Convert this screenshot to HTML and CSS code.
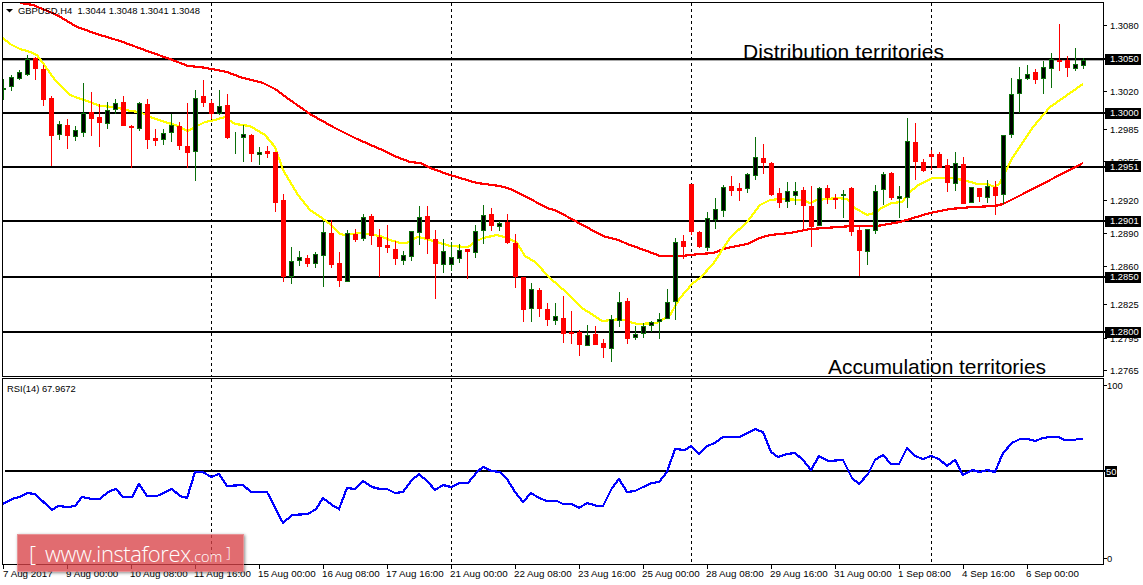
FILE: index.html
```html
<!DOCTYPE html>
<html lang="en">
<head>
<meta charset="utf-8">
<title>GBPUSD,H4</title>
<link rel="stylesheet" href="styles.css">
</head>
<body>
<main class="terminal">
  <section class="pane pane-main">
    <svg class="chart chart-main" viewBox="0 2 1143 375" width="1143" height="375">
      <defs><clipPath id="plot"><rect x="3" y="3" width="1100" height="373"/></clipPath></defs>
      <path class="shade" d="M3 60.5H1103"/>
      <path class="level" d="M3 59H1105M3 113H1105M3 167H1105M3 221H1105M3 277H1105M3 332H1105"/>
      <path class="dash" d="M211.5 3V376M451.5 3V376M691.5 3V376M931.5 3V376"/>
      <polyline class="ma-red" clip-path="url(#plot)" points="20,3 33,5 57,15 77,27 100,35 120,41 150,52 170,59 188,66 200,67 217,70 227,72 240,77 263,83 275,89 290,100 310,114 333,127 357,139 380,149 397,157 410,162 420,163 433,169 450,175 460,178 477,183 500,186 510,189 523,195 547,208 557,211 577,222 603,236 618,240 630,245 647,251 660,256 682,256 700,254 713,253 727,248 747,244 760,238 770,235 790,233 810,229 853,226 877,226 900,222 930,213 950,209 973,207 995,206 1003,204 1023,194 1083,163"/>
      <polyline class="ma-yellow" clip-path="url(#plot)" points="3,38 10,44 20,49 30,52 37,55 45,66 55,80 70,95 78,98 90,102 100,106 115,107 130,111 140,112 150,117 165,122 175,125 188,131 195,127 205,122 215,120 225,117 235,124 250,126 265,135 275,147 283,170 298,195 310,210 322,218 330,224 340,234 345,235 360,233 380,236 390,240 400,243 407,243 417,237 423,238 437,242 450,246 468,247 475,242 483,238 497,235 508,238 517,243 525,256 535,262 550,278 567,293 582,308 593,315 602,321 612,320 620,319 630,322 637,324 657,323 670,315 680,298 692,284 700,278 713,264 730,238 747,222 760,205 770,200 780,199 803,200 810,203 817,200 837,198 847,199 855,208 867,215 875,213 883,207 892,203 902,202 910,192 917,186 932,178 943,178 953,178 967,181 977,184 987,184 995,187 1000,183 1005,172 1013,157 1023,142 1033,127 1050,107 1063,98 1083,84"/>
      <path class="wick-red" d="M35.5 57V80M43.5 65V106M51.5 96V166M67.5 119V149M91.5 92V136M99.5 104V147M123.5 96V126M131.5 125V168M147.5 99V149M155.5 129V146M179.5 122V150M187.5 103V168M203.5 80V107M211.5 100V119M227.5 94V139M251.5 134V162M267.5 146V158M275.5 152V212M283.5 194V282M307.5 255V267M331.5 220V268M339.5 252V287M355.5 229V242M371.5 214V245M379.5 229V277M387.5 225V253M395.5 241V265M427.5 206V254M435.5 230V299M467.5 249V279M491.5 208V231M507.5 214V244M515.5 234V288M523.5 277V322M539.5 288V317M547.5 303V326M563.5 296V343M571.5 311V344M579.5 330V356M595.5 326V345M603.5 339V358M627.5 298V344M683.5 235V259M691.5 184V235M699.5 231V248M731.5 176V196M739.5 183V201M763.5 144V174M771.5 162V196M779.5 188V208M803.5 187V229M811.5 186V247M827.5 185V204M835.5 194V209M851.5 187V236M859.5 226V276M891.5 172V200M915.5 123V180M923.5 159V172M931.5 150V170M939.5 152V168M947.5 159V192M963.5 157V204M979.5 188V202M995.5 181V215M1035.5 69V84M1059.5 24V71M1067.5 56V77"/>
      <path class="body-red" d="M33 58h5v11h-5zM41 69h5v31h-5zM49 98h5v38h-5zM65 125h5v11h-5zM89 112h5v7h-5zM97 117h5v6h-5zM121 102h5v24h-5zM129 126h5v2h-5zM145 104h5v36h-5zM153 138h5v3h-5zM177 126h5v20h-5zM185 146h5v7h-5zM201 96h5v7h-5zM209 103h5v11h-5zM225 105h5v33h-5zM249 135h5v19h-5zM265 151h5v3h-5zM273 152h5v51h-5zM281 200h5v77h-5zM305 258h5v6h-5zM329 233h5v32h-5zM337 263h5v18h-5zM353 234h5v6h-5zM369 216h5v20h-5zM377 237h5v10h-5zM385 245h5v3h-5zM393 249h5v10h-5zM425 216h5v23h-5zM433 239h5v25h-5zM465 249h5v3h-5zM489 214h5v12h-5zM505 222h5v21h-5zM513 243h5v34h-5zM521 277h5v33h-5zM537 290h5v19h-5zM545 309h5v11h-5zM561 318h5v16h-5zM569 332h5v2h-5zM577 332h5v13h-5zM593 334h5v11h-5zM601 343h5v5h-5zM625 301h5v38h-5zM681 241h5v6h-5zM689 184h5v48h-5zM697 232h5v15h-5zM729 186h5v5h-5zM737 188h5v3h-5zM761 158h5v5h-5zM769 163h5v32h-5zM777 193h5v10h-5zM801 190h5v16h-5zM809 206h5v21h-5zM825 188h5v10h-5zM833 198h5v2h-5zM849 188h5v44h-5zM857 230h5v21h-5zM889 173h5v25h-5zM913 142h5v20h-5zM921 162h5v9h-5zM929 154h5v3h-5zM937 154h5v14h-5zM945 165h5v18h-5zM961 164h5v40h-5zM977 188h5v9h-5zM993 187h5v9h-5zM1033 72h5v8h-5zM1057 60h5v2h-5zM1065 60h5v8h-5z"/>
      <path class="wick-green" clip-path="url(#plot)" d="M3.5 79V100M11.5 75V91M19.5 70V80M27.5 55V76M59.5 121V140M75.5 126V141M83.5 83V137M107.5 102V129M115.5 99V114M139.5 102V131M163.5 129V145M171.5 114V142M195.5 90V181M219.5 90V115M235.5 132V154M243.5 125V162M259.5 147V165M291.5 247V284M299.5 251V266M315.5 252V268M323.5 221V287M347.5 230V282M363.5 214V241M403.5 251V265M411.5 231V261M419.5 206V245M443.5 239V273M451.5 242V271M459.5 244V263M475.5 225V258M483.5 205V244M499.5 221V231M531.5 283V322M555.5 303V325M587.5 325V346M611.5 315V362M619.5 292V327M635.5 326V340M643.5 323V338M651.5 321V332M659.5 313V339M667.5 289V319M675.5 238V320M707.5 212V251M715.5 198V229M723.5 185V217M747.5 173V193M755.5 137V180M787.5 182V208M795.5 182V205M819.5 187V226M843.5 190V218M867.5 229V265M875.5 185V234M883.5 172V205M899.5 186V218M907.5 118V208M955.5 152V191M971.5 187V203M987.5 180V203M1003.5 135V204M1011.5 78V138M1019.5 67V113M1027.5 65V80M1043.5 61V94M1051.5 53V88M1075.5 48V71M1083.5 58V69"/>
      <path class="body-green" clip-path="url(#plot)" d="M1.5 88.5h4v1h-4zM9.5 77.5h4v9h-4zM17.5 72.5h4v6h-4zM25.5 59.5h4v15h-4zM57.5 124.5h4v10h-4zM73.5 130.5h4v6h-4zM81.5 113.5h4v19h-4zM105.5 110.5h4v13h-4zM113.5 103.5h4v6h-4zM137.5 103.5h4v25h-4zM161.5 133.5h4v6h-4zM169.5 125.5h4v7h-4zM193.5 98.5h4v53h-4zM217.5 106.5h4v7h-4zM241.5 134.5h4v3h-4zM257.5 152.5h4v2h-4zM289.5 261.5h4v15h-4zM297.5 257.5h4v3h-4zM313.5 254.5h4v9h-4zM321.5 232.5h4v23h-4zM345.5 233.5h4v48h-4zM361.5 217.5h4v21h-4zM401.5 255.5h4v5h-4zM409.5 231.5h4v25h-4zM417.5 217.5h4v15h-4zM441.5 251.5h4v13h-4zM449.5 257.5h4v7h-4zM457.5 250.5h4v8h-4zM473.5 231.5h4v21h-4zM481.5 215.5h4v15h-4zM497.5 223.5h4v3h-4zM529.5 289.5h4v19h-4zM553.5 316.5h4v4h-4zM585.5 335.5h4v10h-4zM609.5 319.5h4v29h-4zM617.5 302.5h4v18h-4zM633.5 334.5h4v3h-4zM641.5 326.5h4v7h-4zM649.5 322.5h4v3h-4zM657.5 319.5h4v2h-4zM665.5 302.5h4v16h-4zM673.5 242.5h4v59h-4zM705.5 218.5h4v29h-4zM713.5 209.5h4v10h-4zM721.5 187.5h4v23h-4zM745.5 174.5h4v14h-4zM753.5 157.5h4v18h-4zM785.5 191.5h4v10h-4zM793.5 191.5h4v4h-4zM817.5 188.5h4v37h-4zM841.5 194.5h4v1h-4zM865.5 229.5h4v22h-4zM873.5 191.5h4v39h-4zM881.5 174.5h4v15h-4zM897.5 196.5h4v2h-4zM905.5 141.5h4v56h-4zM953.5 163.5h4v20h-4zM969.5 187.5h4v15h-4zM985.5 186.5h4v11h-4zM1001.5 135.5h4v59h-4zM1009.5 94.5h4v40h-4zM1017.5 79.5h4v14h-4zM1025.5 74.5h4v4h-4zM1041.5 67.5h4v11h-4zM1049.5 59.5h4v9h-4zM1073.5 64.5h4v4h-4zM1081.5 60.5h4v5h-4z"/>
      <path class="frame" d="M2.5 2.5H1103.5V376.5H2.5ZM1103 25.5H1107M1103 91.5H1107M1103 129.5H1107M1103 161.5H1107M1103 200.5H1107M1103 233.5H1107M1103 266.5H1107M1103 304.5H1107M1103 338.5H1107M1103 370.5H1107"/>
      <path class="marker" d="M6 9H13L9.5 12.5Z"/>
      <text class="legend" x="18" y="14">GBPUSD,H4  1.3044 1.3048 1.3041 1.3048</text>
      <text class="note" x="743" y="59" textLength="201">Distribution territories</text>
      <text class="note" x="828" y="374" textLength="218">Accumulation territories</text>
      <text class="tick" x="1110" y="29">1.3080</text>
      <text class="tick" x="1110" y="95">1.3020</text>
      <text class="tick" x="1110" y="133">1.2985</text>
      <text class="tick" x="1110" y="165">1.2955</text>
      <text class="tick" x="1110" y="204">1.2920</text>
      <text class="tick" x="1110" y="237">1.2890</text>
      <text class="tick" x="1110" y="270">1.2860</text>
      <text class="tick" x="1110" y="308">1.2825</text>
      <text class="tick" x="1110" y="342">1.2795</text>
      <text class="tick" x="1110" y="374">1.2765</text>
      <path class="tag" d="M1105 54h36v11h-36zM1105 108h36v11h-36zM1105 161h36v11h-36zM1105 216h36v11h-36zM1105 272h36v11h-36zM1105 327h36v11h-36z"/>
      <text class="tag-text" x="1110" y="62">1.3050</text>
      <text class="tag-text" x="1110" y="116">1.3000</text>
      <text class="tag-text" x="1110" y="170">1.2951</text>
      <text class="tag-text" x="1110" y="224">1.2901</text>
      <text class="tag-text" x="1110" y="280">1.2850</text>
      <text class="tag-text" x="1110" y="335">1.2800</text>
    </svg>
  </section>
  <section class="pane pane-rsi">
    <svg class="chart chart-rsi" viewBox="0 378 1143 187" width="1143" height="187">
      <path class="level" d="M5 471H1105"/>
      <path class="dash" d="M211.5 379V564M451.5 379V564M691.5 379V564M931.5 379V564"/>
      <polyline class="rsi-line" points="3,504 12,499 20,497 27,493 35,494 52,510 58,506 68,507 75,506 82,497 92,499 100,499 108,492 116,489 123,497 132,497 139,484 147,496 157,496 172,489 180,496 187,498 195,472 203,472 211,477 219,474 227,486 243,485 251,492 267,492 283,523 292,515 308,514 316,509 323,498 332,505 339,509 347,488 355,489 363,481 372,487 380,489 387,489 395,493 403,492 412,480 419,474 428,482 435,490 443,485 451,487 460,483 468,483 477,472 483,467 492,471 500,472 507,479 515,492 523,502 531,493 539,498 547,501 557,501 563,504 572,504 579,508 587,503 597,506 603,506 612,488 619,479 627,492 635,491 643,487 652,483 659,482 667,472 675,449 685,450 691,446 699,454 707,446 715,443 723,437 740,437 755,429 760,431 763,432 771,452 778,457 787,454 795,453 803,460 811,470 819,456 828,461 843,460 852,478 859,484 868,474 875,460 883,455 891,464 899,464 907,448 915,456 923,459 931,456 939,459 947,466 955,460 963,475 972,470 980,472 987,470 995,472 1003,453 1012,443 1020,439 1028,439 1035,441 1043,438 1050,437 1058,437 1065,440 1075,440 1077,439 1083,439"/>
      <path class="frame" d="M2.5 378.5H1103.5V564.5H2.5ZM1103 385.5H1107M1103 558.5H1107"/>
      <text class="legend" x="7" y="392">RSI(14) 67.9672</text>
      <text class="tick" x="1107" y="389">100</text>
      <text class="tick" x="1107" y="562">0</text>
      <path class="tag" d="M1105 466h12v11h-12z"/>
      <text class="tag-text" x="1106" y="475">50</text>
    </svg>
  </section>
  <ol class="time-axis">
    <li class="time-slot">7 Aug 2017</li>
    <li class="time-slot">9 Aug 00:00</li>
    <li class="time-slot">10 Aug 08:00</li>
    <li class="time-slot">11 Aug 16:00</li>
    <li class="time-slot">15 Aug 00:00</li>
    <li class="time-slot">16 Aug 08:00</li>
    <li class="time-slot">17 Aug 16:00</li>
    <li class="time-slot">21 Aug 00:00</li>
    <li class="time-slot">22 Aug 08:00</li>
    <li class="time-slot">23 Aug 16:00</li>
    <li class="time-slot">25 Aug 00:00</li>
    <li class="time-slot">28 Aug 08:00</li>
    <li class="time-slot">29 Aug 16:00</li>
    <li class="time-slot">31 Aug 00:00</li>
    <li class="time-slot">1 Sep 08:00</li>
    <li class="time-slot">4 Sep 16:00</li>
    <li class="time-slot">6 Sep 00:00</li>
  </ol>
  <aside class="watermark">
    <span class="wm-bracket">[</span>
    <span class="wm-domain">www.instaforex<span class="wm-tld">.com</span></span>
    <span class="wm-bracket wm-close">]</span>
  </aside>
</main>
</body>
</html>
```
FILE: styles.css
```css
* { box-sizing: border-box; }
html, body { margin: 0; padding: 0; background: #fff; }
.terminal {
  position: relative;
  width: 1143px;
  height: 585px;
  padding-top: 2px;
  overflow: hidden;
  display: flex;
  flex-direction: column;
  gap: 1px;
  background: #fff;
  font-family: "Liberation Sans", Arial, sans-serif;
}
.pane { flex: none; line-height: 0; }
.chart { display: block; }
.frame { fill: none; stroke: #000; stroke-width: 1; shape-rendering: crispEdges; }
.level { fill: none; stroke: #000; stroke-width: 2; shape-rendering: crispEdges; }
.shade { fill: none; stroke: #aaa; stroke-width: 1; shape-rendering: crispEdges; }
.dash { fill: none; stroke: #000; stroke-width: 1; stroke-dasharray: 3 3; shape-rendering: crispEdges; }
.ma-red { fill: none; stroke: #f00; stroke-width: 2.2; shape-rendering: crispEdges; }
.ma-yellow { fill: none; stroke: #ff0; stroke-width: 2.2; shape-rendering: crispEdges; }
.rsi-line { fill: none; stroke: #00f; stroke-width: 2.2; shape-rendering: crispEdges; }
.wick-red { fill: none; stroke: #f00; stroke-width: 1; shape-rendering: crispEdges; }
.body-red { fill: #f00; shape-rendering: crispEdges; }
.wick-green { fill: none; stroke: #0a6e0a; stroke-width: 1; shape-rendering: crispEdges; }
.body-green { fill: #000; stroke: #0a6e0a; stroke-width: 1; shape-rendering: crispEdges; }
.marker { fill: #000; }
.tag { fill: #000; shape-rendering: crispEdges; }
.legend, .tick, .tag-text {
  font-family: "Liberation Sans", Arial, sans-serif;
  font-size: 9.4px;
  white-space: pre;
}
.legend, .tick { fill: #000; }
.tag-text { fill: #fff; }
.note {
  font-family: "Liberation Sans", Arial, sans-serif;
  font-size: 21px;
  fill: #000;
}
.time-axis {
  list-style: none;
  margin: -1px 0 0;
  padding: 0 0 0 3px;
  display: grid;
  grid-template-columns: repeat(17, 64px);
  font-size: 9.8px;
  line-height: 11px;
  color: #000;
}
.time-slot {
  position: relative;
  padding-top: 3px;
  white-space: nowrap;
}
.time-slot + .time-slot { text-indent: -1px; }
.time-slot::before {
  content: "";
  display: block;
  position: absolute;
  left: 0;
  top: 0;
  width: 1px;
  height: 4px;
  background: #000;
}
.watermark {
  position: absolute;
  left: 17px;
  top: 534px;
  width: 227px;
  height: 38px;
  display: flex;
  align-items: center;
  padding: 0 8px 0 11px;
  background: rgba(216, 66, 72, 0.78);
  border: 1px solid rgba(255, 255, 255, 0.25);
  box-shadow: 1px 1px 3px rgba(0, 0, 0, 0.45);
  color: #fff;
  font-family: "Open Sans", sans-serif;
}
.wm-bracket { font-size: 22px; font-weight: 300; line-height: 1; }
.wm-close { font-size: 14px; margin-left: 4px; }
.wm-domain { margin-left: 9px; font-size: 22px; font-weight: 300; line-height: 1; letter-spacing: -0.4px; white-space: nowrap; }
.wm-tld { font-size: 14.5px; letter-spacing: 0; }
```
